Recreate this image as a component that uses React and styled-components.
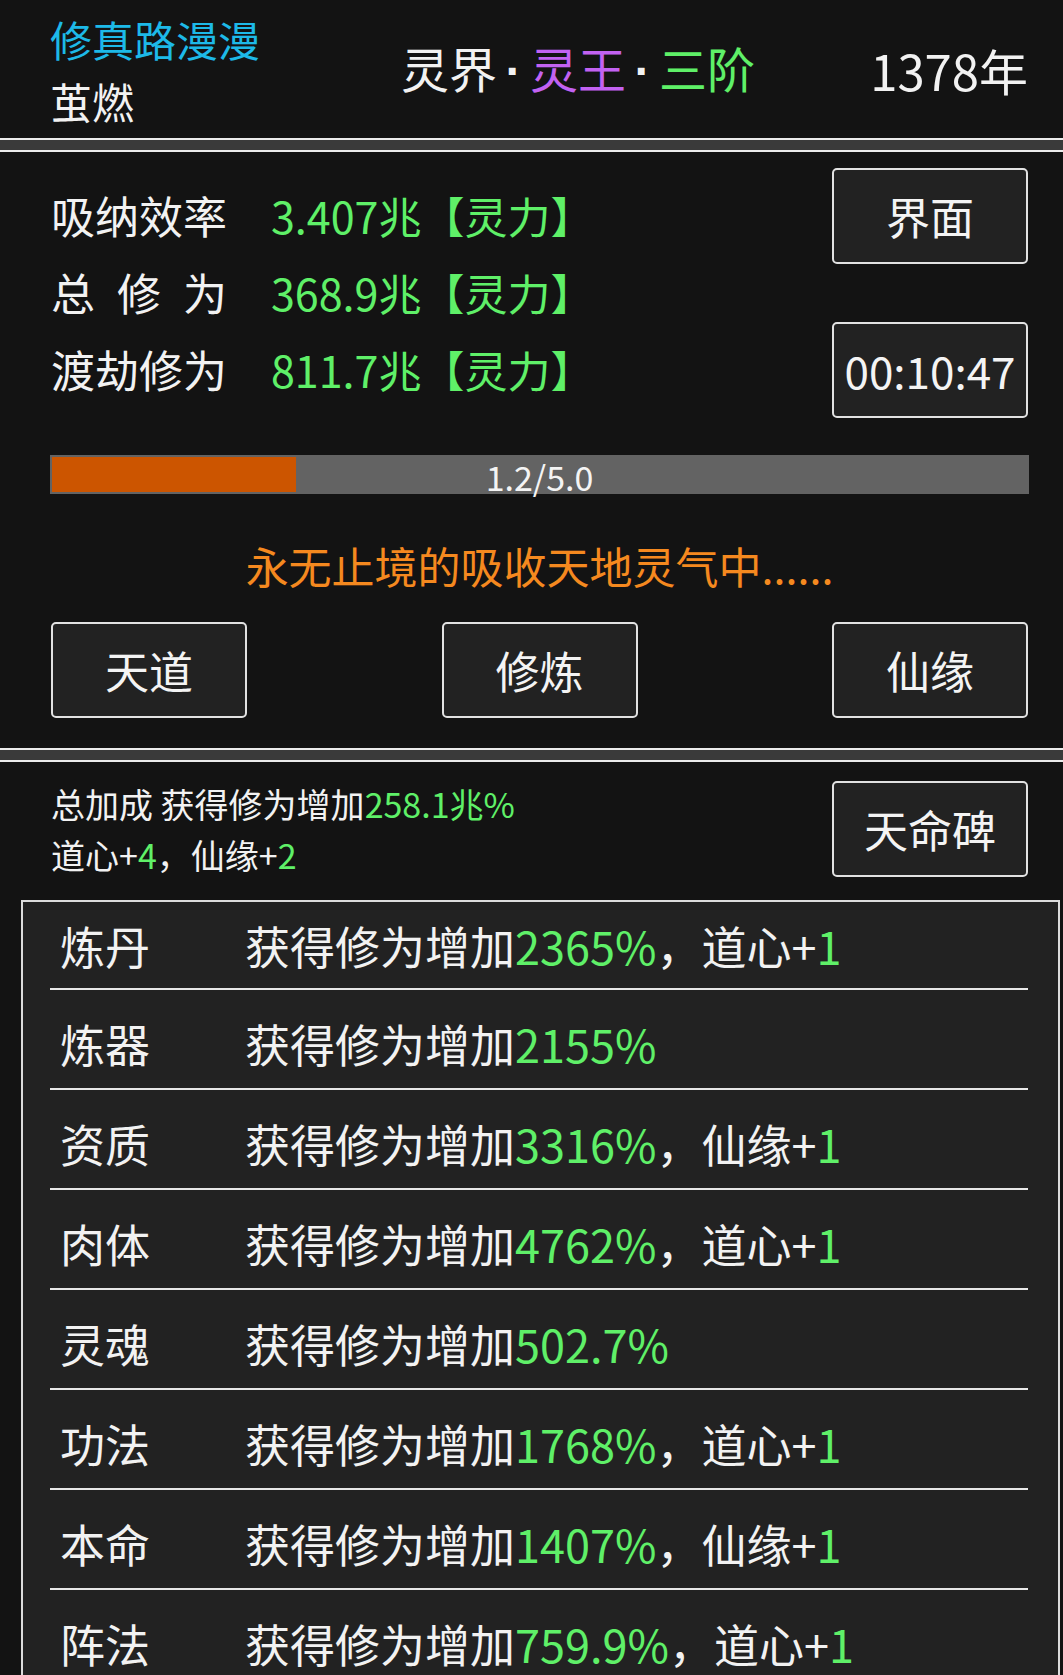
import styled, { createGlobalStyle } from 'styled-components';

const GlobalStyle = createGlobalStyle`
  * { box-sizing: border-box; }
  html, body {
    margin: 0;
    padding: 0;
    background: #3a3a3a;
  }
  body {
    font-family: 'Noto Sans CJK SC', 'Noto Sans', sans-serif;
    color: #f2f2f2;
  }
`;

const green = '#5ff068';

const stats = [
  { label: '吸纳效率', value: '3.407兆' },
  { label: '总 修 为', value: '368.9兆' },
  { label: '渡劫修为', value: '811.7兆' },
];

const bonuses = [
  { name: '炼丹', pct: '2365%', extra: '道心', add: '1' },
  { name: '炼器', pct: '2155%' },
  { name: '资质', pct: '3316%', extra: '仙缘', add: '1' },
  { name: '肉体', pct: '4762%', extra: '道心', add: '1' },
  { name: '灵魂', pct: '502.7%' },
  { name: '功法', pct: '1768%', extra: '道心', add: '1' },
  { name: '本命', pct: '1407%', extra: '仙缘', add: '1' },
  { name: '阵法', pct: '759.9%', extra: '道心', add: '1' },
];

const progress = { cur: 1.2, max: 5.0 };

const App = () => {
  return (
    <>
      <GlobalStyle />
      <Page>
        <Header>
          <TitleBlock>
            <GameTitle>修真路漫漫</GameTitle>
            <PlayerName>茧燃</PlayerName>
          </TitleBlock>
          <Realm>
            灵界<Dot>·</Dot>
            <Tint $color='#c262f2'>灵王</Tint>
            <Dot>·</Dot>
            <Tint $color={green}>三阶</Tint>
          </Realm>
          <Year>1378年</Year>
        </Header>

        <Panel $bottom>
          <StatsGrid>
            {stats.map((s, i) => (
              <StatRow key={s.label} style={{ gridRow: i + 1 }}>
                <StatLabel>{s.label}</StatLabel>
                <StatValue>{s.value}【灵力】</StatValue>
              </StatRow>
            ))}
            <Button style={{ gridRow: 1 }}>界面</Button>
            <Button style={{ gridRow: 3 }}>00:10:47</Button>
          </StatsGrid>

          <Bar>
            <BarFill style={{ width: `${(progress.cur / progress.max) * 100 + 1}%` }} />
            <BarText>
              {progress.cur.toFixed(1)}/{progress.max.toFixed(1)}
            </BarText>
          </Bar>

          <Message>永无止境的吸收天地灵气中......</Message>

          <ButtonRow>
            <Button>天道</Button>
            <Button>修炼</Button>
            <Button>仙缘</Button>
          </ButtonRow>
        </Panel>

        <Panel $last>
          <BonusHead>
            <BonusSummary>
              <div>
                总加成 获得修为增加<Tint $color={green}>258.1兆%</Tint>
              </div>
              <div>
                道心+<Tint $color={green}>4</Tint>，仙缘+<Tint $color={green}>2</Tint>
              </div>
            </BonusSummary>
            <Button>天命碑</Button>
          </BonusHead>

          <BonusBox>
            {bonuses.map((b) => (
              <BonusRow key={b.name}>
                <BonusName>{b.name}</BonusName>
                <span>
                  获得修为增加<Tint $color={green}>{b.pct}</Tint>
                  {b.extra && (
                    <>
                      ，{b.extra}+<Tint $color={green}>{b.add}</Tint>
                    </>
                  )}
                </span>
              </BonusRow>
            ))}
          </BonusBox>
        </Panel>
      </Page>
    </>
  );
};

const Page = styled.div`
  width: 1063px;
  height: 1675px;
  overflow: hidden;
  display: flex;
  flex-direction: column;
  gap: 10px;

  & > * {
    flex-shrink: 0;
  }
`;

const Tint = styled.span`
  color: ${(p) => p.$color};
`;

const Header = styled.header`
  display: flex;
  align-items: center;
  height: 140px;
  padding: 0 35px 0 50px;
  background: #131313;
  border-bottom: 2px solid #ececec;
`;

const TitleBlock = styled.div`
  width: 351px;
  display: flex;
  flex-direction: column;
  align-self: flex-start;
  padding-top: 8px;
  font-size: 42px;
  line-height: 62px;
`;

const GameTitle = styled.div`
  color: #1db9e8;
`;

const PlayerName = styled.div`
  color: #f2f2f2;
`;

const Realm = styled.div`
  font-size: 48px;
  line-height: 1;
  white-space: nowrap;
`;

const Dot = styled.span`
  display: inline-block;
  width: 33px;
  text-align: center;
  font-family: 'Liberation Sans', sans-serif;
  font-weight: bold;
`;

const Year = styled.div`
  margin-left: auto;
  font-size: 49px;
  line-height: 1;
`;

const Panel = styled.section`
  display: flex;
  flex-direction: column;
  background: #131313;
  border-top: 2px solid #ececec;
  border-bottom: ${(p) => (p.$bottom ? '2px solid #ececec' : 'none')};
  padding: ${(p) => (p.$last ? '0' : '0 35px 30px 51px')};
  flex-grow: ${(p) => (p.$last ? '1' : '0')};
`;

const StatsGrid = styled.div`
  display: grid;
  grid-template-columns: 1fr 196px;
  grid-template-rows: repeat(3, 77px);
  margin-top: 25px;
  align-items: center;

  & > button {
    grid-column: 2;
  }
`;

const StatRow = styled.div`
  grid-column: 1;
  display: flex;
  align-items: center;
  font-size: 44px;
  line-height: 77px;
  white-space: nowrap;
`;

const StatLabel = styled.span`
  width: 176px;
  margin-right: 44px;
  text-align: justify;
  text-align-last: justify;
`;

const StatValue = styled.span`
  color: ${green};
  font-size: 43px;
`;

const Button = styled.button`
  width: 196px;
  height: 96px;
  padding: 0;
  border: 2px solid #e2e2e2;
  border-radius: 5px;
  background: #222;
  color: #f4f4f4;
  font-family: inherit;
  font-size: 44px;
  line-height: 1;
  display: flex;
  align-items: center;
  justify-content: center;
  flex-shrink: 0;
`;

const Bar = styled.div`
  position: relative;
  height: 39px;
  margin: 47px -1px 0 -1px;
  background: #636363;
  padding: 2px;
`;

const BarFill = styled.div`
  height: 100%;
  background: #cc5500;
`;

const BarText = styled.div`
  position: absolute;
  inset: 0;
  display: flex;
  align-items: center;
  justify-content: center;
  font-size: 34px;
  line-height: 1;
  color: #f4f4f4;
  padding-top: 4px;
`;

const Message = styled.div`
  margin-top: 41px;
  font-size: 43px;
  line-height: 60px;
  color: #f5891f;
  text-align: center;
`;

const ButtonRow = styled.div`
  display: flex;
  justify-content: space-between;
  margin-top: 27px;
`;

const BonusHead = styled.div`
  display: flex;
  align-items: center;
  justify-content: space-between;
  flex-shrink: 0;
  padding: 16px 35px 0 51px;
`;

const BonusSummary = styled.div`
  font-size: 34px;
  line-height: 51px;
`;

const BonusBox = styled.div`
  margin: 20px 3px 0 21px;
  flex: 1 0 auto;
  background: #222;
  border: 2px solid #dcdcdc;
  border-bottom: none;
`;

const BonusRow = styled.div`
  display: flex;
  align-items: center;
  height: 100px;
  margin: 0 30px 0 27px;
  padding-top: 8px;
  border-bottom: 2px solid #e8e8e8;
  font-size: 45px;
  white-space: nowrap;

  &:first-child {
    height: 88px;
    padding-top: 0;
  }
`;

const BonusName = styled.span`
  width: 195px;
  padding-left: 10px;
`;

export default App;
